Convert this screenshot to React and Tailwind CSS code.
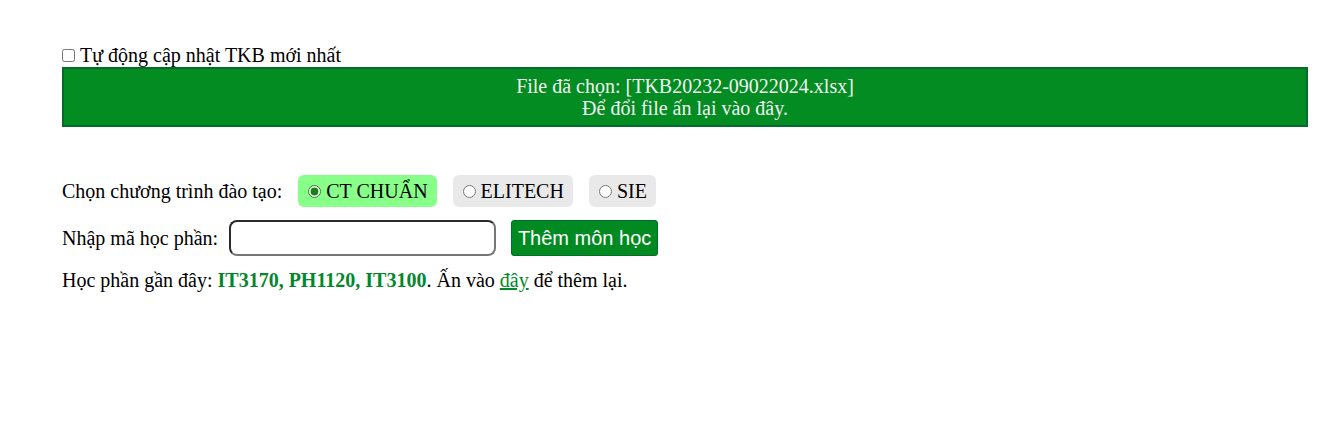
import React, { useState } from 'react';

const programs = ['CT CHUẨN', 'ELITECH', 'SIE'];

export default function App() {
  const [program, setProgram] = useState('CT CHUẨN');
  const [code, setCode] = useState('');

  return (
    <div className="min-h-[434px] bg-white text-black text-[20px] leading-[23px] font-['Liberation_Serif',serif] pl-[62px] pr-[30px] pt-[44px]">
      {/* Tự động cập nhật */}
      <label className="flex items-center gap-[5px] h-[23px]">
        <input type="checkbox" className="w-[13px] h-[13px] m-0" />
        <span>Tự động cập nhật TKB mới nhất</span>
      </label>

      {/* File đã chọn */}
      <div className="h-[60px] bg-[#028c22] border-2 border-[#046b2d] text-[#f2f2f2] flex flex-col items-center justify-center leading-[22px]">
        <span>File đã chọn: [TKB20232-09022024.xlsx]</span>
        <span>Để đổi file ấn lại vào đây.</span>
      </div>

      <div className="mt-[48px] flex items-center gap-4 h-[32px]">
        <span>Chọn chương trình đào tạo:</span>
        {programs.map((p) => (
          <label
            key={p}
            className={
              'flex items-center gap-[5px] h-[32px] pl-[10px] pr-[9px] rounded-[6px] ' +
              (program === p ? 'bg-[#88ff88]' : 'bg-[#e9e9e9]')
            }
          >
            <input
              type="radio"
              name="ct"
              checked={program === p}
              onChange={() => setProgram(p)}
              className="w-[13px] h-[13px] m-0 accent-[#1a7f1a]"
            />
            <span>{p}</span>
          </label>
        ))}
      </div>

      <div className="mt-[13px] flex items-center h-[36px]">
        <span>Nhập mã học phần:</span>
        <input
          value={code}
          onChange={(e) => setCode(e.target.value)}
          className="ml-[11px] w-[267px] h-[36px] rounded-[8px] border-2 border-[#2b2b2b] border-b-[#767676] border-r-[#767676] px-2 outline-none"
        />
        <button className="ml-[15px] w-[147px] h-[36px] bg-[#028a22] border border-[#046b2d] rounded-[3px] text-white text-[20px] font-['Liberation_Sans',sans-serif]">
          Thêm môn học
        </button>
      </div>

      <div className="mt-[13px]">
        Học phần gần đây:{' '}
        <b className="text-[#03872b]">IT3170, PH1120, IT3100</b>. Ấn vào{' '}
        <a href="#" className="text-[#03872b] underline">đây</a> để thêm lại.
      </div>
    </div>
  );
}
